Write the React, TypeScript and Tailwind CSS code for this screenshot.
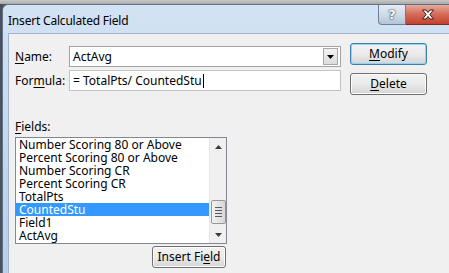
import React from "react";

const fields = [
  "Number Scoring 80 or Above",
  "Percent Scoring 80 or Above",
  "Number Scoring CR",
  "Percent Scoring CR",
  "TotalPts",
  "CountedStu",
  "Field1",
  "ActAvg",
];

const ui = "font-['Noto_Sans','Open_Sans',sans-serif] text-[12px] text-black";

function Btn({ children, primary }: { children: React.ReactNode; primary?: boolean }) {
  return (
    <div
      className={`h-full flex items-center justify-center rounded-[3px] border ${
        primary ? "border-[#3c7fb1] shadow-[inset_0_0_0_1px_#8fd3f8]" : "border-[#707070] shadow-[inset_0_0_0_1px_#fcfcfc]"
      } bg-linear-to-b from-[#f2f2f2] via-[#ebebeb] to-[#d4d4d4] ${ui}`}
    >
      {children}
    </div>
  );
}

export default function App() {
  return (
    <div className="w-[449px] h-[273px] overflow-hidden bg-[#4b525d] pl-[2px] flex flex-col">
      <div className="h-[4px] shrink-0 -ml-[2px] bg-linear-to-b from-[#c8c8c8] to-[#a9a9a9]" />
      <div className="flex-1 flex flex-col rounded-tl-[6px] border-l border-t border-[#5e7189] bg-linear-to-b from-[#d3e3f4] via-[#c4d8ee] to-[#b9cfe8]">
        {/* title bar */}
        <div className="h-[28px] shrink-0 flex items-start">
          <div className={`pl-[5px] pt-[7px] ${ui} text-[12.5px] tracking-[-0.2px]`}>Insert Calculated Field</div>
          <div className="ml-auto flex">
            <div className="w-[28px] h-[20px] rounded-bl-[4px] border border-t-0 border-[#6e7f95] bg-linear-to-b from-[#e4edf6] via-[#cfdbe8] to-[#b3c5d8] flex items-center justify-center font-['DejaVu_Sans',sans-serif] font-bold text-[13px] text-white [text-shadow:0_0_2px_#1c2d45,0_0_1px_#1c2d45]">
              ?
            </div>
            <div className="w-[43px] h-[20px] border-b border-[#7a2a20] bg-linear-to-b from-[#e9a99c] via-[#d36a58] to-[#c2402c] flex items-center justify-center">
              <svg width="14" height="11" viewBox="0 0 14 11">
                <path d="M1.5 1 L5 1 L7 3.5 L9 1 L12.5 1 L8.8 5.5 L12.5 10 L9 10 L7 7.5 L5 10 L1.5 10 L5.2 5.5 Z" fill="#fff" stroke="#3b1a16" strokeWidth="1" strokeLinejoin="round" />
              </svg>
            </div>
          </div>
        </div>
        {/* body */}
        <div className="flex-1 ml-[5px] bg-[#f0f0f0] border-l border-t border-[#9fb3ca] pl-[6px] flex flex-col">
          <div className="flex items-start">
            <div className="flex flex-col gap-[3px] pt-[12px]">
              <div className="flex items-center">
                <div className={`w-[54px] ${ui}`}>
                  <span className="underline underline-offset-2">N</span>ame:
                </div>
                <div className="w-[272px] h-[21px] border border-[#a3a3a3] bg-white flex items-center pl-[3px] pr-[2px]">
                  <span className={ui}>ActAvg</span>
                  <div className="ml-auto w-[15px] h-[17px] border border-[#a8a8a8] bg-linear-to-b from-[#f3f3f3] to-[#dcdcdc] flex items-center justify-center">
                    <svg width="7" height="4" viewBox="0 0 7 4">
                      <path d="M0 0 L7 0 L3.5 4 Z" fill="#000" />
                    </svg>
                  </div>
                </div>
              </div>
              <div className="flex items-center">
                <div className={`w-[54px] ${ui}`}>
                  For<span className="underline underline-offset-2">m</span>ula:
                </div>
                <div className="w-[272px] h-[21px] border border-[#c4c4c4] bg-white flex items-center pl-[3px]">
                  <span className={ui}>= TotalPts/ CountedStu</span>
                  <span className="w-px h-[14px] bg-black ml-[1px]" />
                </div>
              </div>
            </div>
            <div className="flex flex-col gap-[8px] pt-[9px] ml-[9px]">
              <div className="w-[77px] h-[22px]">
                <Btn primary>
                  <span className="leading-[20px]">
                    <span className="underline underline-offset-2">M</span>odify
                  </span>
                </Btn>
              </div>
              <div className="w-[77px] h-[22px]">
                <Btn>
                  <span className="leading-[20px]">
                    <span className="underline underline-offset-2">D</span>elete
                  </span>
                </Btn>
              </div>
            </div>
          </div>

          <div className={`mt-[24px] h-[15px] leading-[15px] ${ui}`}>
            <span className="underline underline-offset-2">F</span>ields:
          </div>
          <div className="mt-[3px] w-[212px] h-[107px] border border-[#828790] bg-white flex">
            <div className="w-[193px] flex flex-col">
              {fields.map((f) => (
                <div
                  key={f}
                  className={`h-[13px] leading-[13px] pl-[3px] whitespace-nowrap ${ui} ${
                    f === "CountedStu" ? "bg-[#3399ff] text-white" : ""
                  }`}
                >
                  {f}
                </div>
              ))}
            </div>
            <div className="w-[17px] bg-[#f0f0f0] border-l border-[#e6e6e6] flex flex-col items-center">
              <div className="h-[17px] flex items-center justify-center">
                <svg width="7" height="4" viewBox="0 0 7 4">
                  <path d="M0 4 L7 4 L3.5 0 Z" fill="#3d3d3d" />
                </svg>
              </div>
              <div className="h-[45px]" />
              <div className="w-[15px] h-[24px] rounded-[2px] border border-[#979797] bg-linear-to-r from-[#f2f2f2] to-[#d6d6d6] flex flex-col items-center justify-center gap-[2px]">
                <div className="w-[7px] h-px bg-[#5a5a5a]" />
                <div className="w-[7px] h-px bg-[#5a5a5a]" />
                <div className="w-[7px] h-px bg-[#5a5a5a]" />
                <div className="w-[7px] h-px bg-[#5a5a5a]" />
              </div>
              <div className="flex-1" />
              <div className="h-[17px] flex items-center justify-center">
                <svg width="7" height="4" viewBox="0 0 7 4">
                  <path d="M0 0 L7 0 L3.5 4 Z" fill="#3d3d3d" />
                </svg>
              </div>
            </div>
          </div>
          <div className="w-[212px] flex justify-end pr-[1px] mt-[2px]">
            <div className="w-[74px] h-[22px]">
              <Btn>
                <span className="leading-[20px]">
                  Insert Fi<span className="underline underline-offset-2">e</span>ld
                </span>
              </Btn>
            </div>
          </div>
        </div>
      </div>
    </div>
  );
}
